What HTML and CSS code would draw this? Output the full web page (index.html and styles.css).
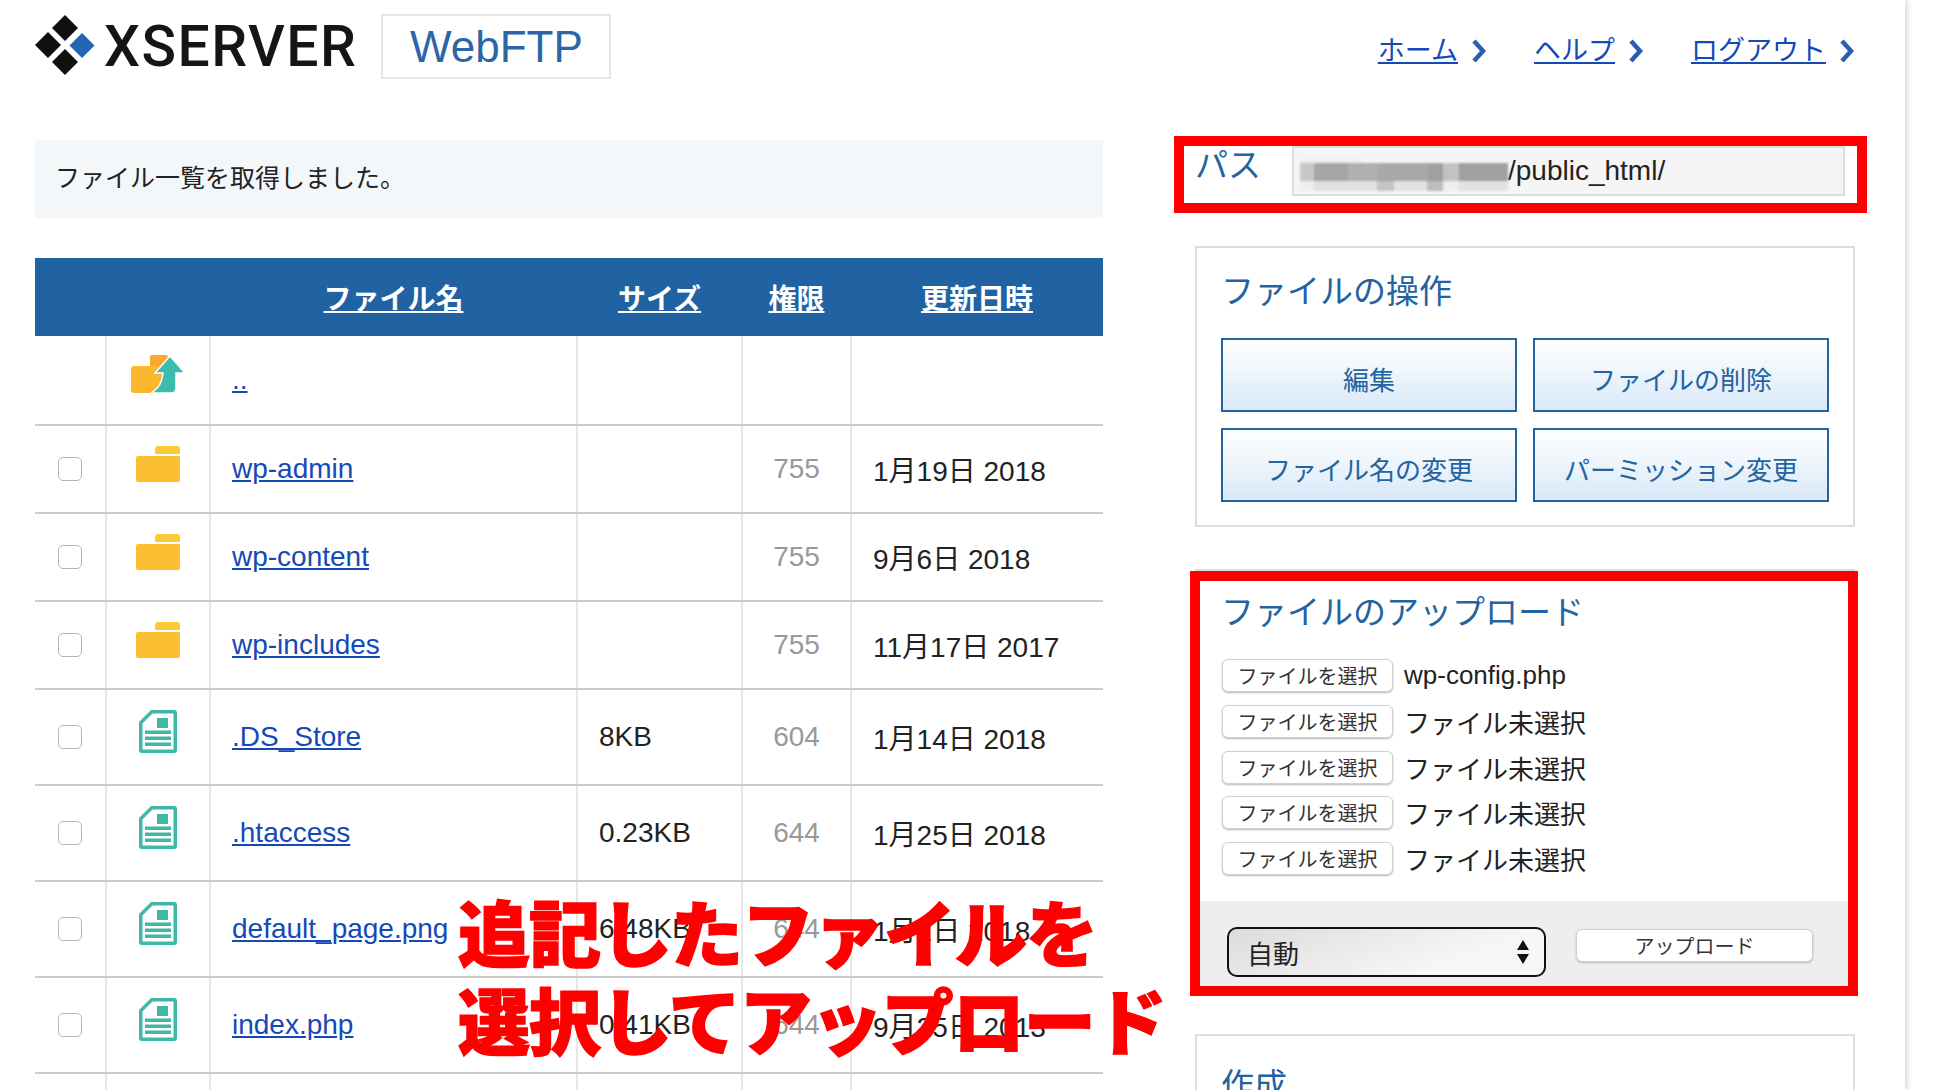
FILE: index.html
```html
<!DOCTYPE html>
<html lang="ja">
<head>
    <meta charset="UTF-8">
    <title>XSERVER WebFTP</title>
    <link rel="stylesheet" href="styles.css">
</head>
<body>

<!-- icons used more than once -->
<svg class="sprites" width="0" height="0">
    <symbol id="i-folder" viewBox="0 0 44 36">
        <path d="M19 8V3a3 3 0 0 1 3-3h19a3 3 0 0 1 3 3v5z" fill="#fdc938"/>
        <path d="M0 12a2 2 0 0 1 2-2h42v24a2 2 0 0 1-2 2H2a2 2 0 0 1-2-2z" fill="#fcbf32"/>
    </symbol>
    <symbol id="i-file" viewBox="0 0 38 43">
        <path d="M12 0h23a3 3 0 0 1 3 3v37a3 3 0 0 1-3 3H3a3 3 0 0 1-3-3V12z" fill="#3fb8a8"/>
        <path d="M13.5 3.500H34.500V39.500H3.500V13.500z" fill="#fff"/>
        <rect x="18" y="8" width="11" height="10" fill="#3fb8a8"/>
        <rect x="6" y="20.500" width="26" height="3.500" fill="#3fb8a8"/>
        <rect x="6" y="26.500" width="26" height="3.500" fill="#3fb8a8"/>
        <rect x="6" y="32.500" width="26" height="3.500" fill="#3fb8a8"/>
    </symbol>
    <symbol id="i-chevron" viewBox="0 0 16 24">
        <path d="M3 2l9 10-9 10" fill="none" stroke="#2c5cb4" stroke-width="4.500"/>
    </symbol>
</svg>

<div class="page">

    <!-- Top bar -->
    <header class="topbar">
        <div class="brand">
            <svg class="brand-mark" width="60" height="60" viewBox="0 0 60 60">
                <path d="M30 0l13 13-13 13-13-13z" fill="#111"/>
                <path d="M13 17l13 13-13 13L0 30z" fill="#111"/>
                <path d="M47 18l12.500 12.500L47 43 34.500 30.500z" fill="#2265b0"/>
                <path d="M30 34l13 13-13 13-13-13z" fill="#111"/>
            </svg>
            <span class="brand-name">XSERVER</span>
            <span class="brand-app">WebFTP</span>
        </div>
        <nav class="topnav">
            <a href="#">ホーム</a><svg class="chev"><use href="#i-chevron"/></svg>
            <a href="#">ヘルプ</a><svg class="chev"><use href="#i-chevron"/></svg>
            <a href="#">ログアウト</a><svg class="chev"><use href="#i-chevron"/></svg>
        </nav>
    </header>

    <!-- File list -->
    <main class="files">
        <p class="notice">ファイル一覧を取得しました。</p>

        <table class="filetable">
            <colgroup>
                <col class="c-check"><col class="c-icon"><col class="c-name"><col class="c-size"><col class="c-perm"><col class="c-date">
            </colgroup>
            <thead>
                <tr>
                    <th></th>
                    <th></th>
                    <th><a href="#">ファイル名</a></th>
                    <th><a href="#">サイズ</a></th>
                    <th><a href="#">権限</a></th>
                    <th><a href="#">更新日時</a></th>
                </tr>
            </thead>
            <tbody>
                <tr class="r-up">
                    <td></td>
                    <td class="icon">
                        <svg class="i-up" viewBox="0 0 54 38">
                            <rect x="19" y="0" width="18" height="12" rx="2" fill="#f9a92e"/>
                            <path d="M0 14a3 3 0 0 1 3-3h37v27H3a3 3 0 0 1-3-3z" fill="#fbb72e"/>
                            <path d="M39 1l15 17h-9v15q0 5-5 5H20q11-6 12-20h-8z" fill="#3cbcab" stroke="#fff" stroke-width="1.500"/>
                        </svg>
                    </td>
                    <td class="name"><a href="#">..</a></td>
                    <td></td>
                    <td></td>
                    <td></td>
                </tr>
                <tr class="r-dir">
                    <td class="check"><input type="checkbox"></td>
                    <td class="icon"><svg class="i-folder"><use href="#i-folder"/></svg></td>
                    <td class="name"><a href="#">wp-admin</a></td>
                    <td></td>
                    <td class="perm">755</td>
                    <td>1月19日 2018</td>
                </tr>
                <tr class="r-dir">
                    <td class="check"><input type="checkbox"></td>
                    <td class="icon"><svg class="i-folder"><use href="#i-folder"/></svg></td>
                    <td class="name"><a href="#">wp-content</a></td>
                    <td></td>
                    <td class="perm">755</td>
                    <td>9月6日 2018</td>
                </tr>
                <tr class="r-dir">
                    <td class="check"><input type="checkbox"></td>
                    <td class="icon"><svg class="i-folder"><use href="#i-folder"/></svg></td>
                    <td class="name"><a href="#">wp-includes</a></td>
                    <td></td>
                    <td class="perm">755</td>
                    <td>11月17日 2017</td>
                </tr>
                <tr class="r-file">
                    <td class="check"><input type="checkbox"></td>
                    <td class="icon"><svg class="i-file"><use href="#i-file"/></svg></td>
                    <td class="name"><a href="#">.DS_Store</a></td>
                    <td>8KB</td>
                    <td class="perm">604</td>
                    <td>1月14日 2018</td>
                </tr>
                <tr class="r-file">
                    <td class="check"><input type="checkbox"></td>
                    <td class="icon"><svg class="i-file"><use href="#i-file"/></svg></td>
                    <td class="name"><a href="#">.htaccess</a></td>
                    <td>0.23KB</td>
                    <td class="perm">644</td>
                    <td>1月25日 2018</td>
                </tr>
                <tr class="r-file">
                    <td class="check"><input type="checkbox"></td>
                    <td class="icon"><svg class="i-file"><use href="#i-file"/></svg></td>
                    <td class="name"><a href="#">default_page.png</a></td>
                    <td>6.48KB</td>
                    <td class="perm">644</td>
                    <td>1月2日 2018</td>
                </tr>
                <tr class="r-file">
                    <td class="check"><input type="checkbox"></td>
                    <td class="icon"><svg class="i-file"><use href="#i-file"/></svg></td>
                    <td class="name"><a href="#">index.php</a></td>
                    <td>0.41KB</td>
                    <td class="perm">644</td>
                    <td>9月25日 2013</td>
                </tr>
                <tr class="r-file">
                    <td></td><td></td><td></td><td></td><td></td><td></td>
                </tr>
            </tbody>
        </table>
    </main>

    <!-- Side panels -->
    <aside class="side">
        <div class="pathrow">
            <span class="pathlabel">パス</span>
            <div class="pathbox">
                <!-- blurred part of the path -->
                <svg class="mosaic" width="208" height="32" viewBox="0 0 208 32">
                    <rect x="0" y="0" width="62" height="5" fill="#ededed"/>
                    <rect x="0" y="4" width="14" height="18" fill="#c8c8c8"/>
                    <rect x="14" y="4" width="34" height="18" fill="#a6a6a6"/>
                    <rect x="48" y="4" width="30" height="18" fill="#b0b0b0"/>
                    <rect x="78" y="4" width="50" height="18" fill="#a8a8a8"/>
                    <rect x="128" y="4" width="15" height="18" fill="#a0a0a0"/>
                    <rect x="143" y="4" width="16" height="18" fill="#c2c2c2"/>
                    <rect x="159" y="4" width="49" height="18" fill="#a0a0a0"/>
                    <rect x="0" y="22" width="14" height="10" fill="#eeeeee"/>
                    <rect x="14" y="22" width="63" height="10" fill="#e0e0e0"/>
                    <rect x="77" y="22" width="17" height="10" fill="#c4c4c4"/>
                    <rect x="94" y="22" width="33" height="10" fill="#e2e2e2"/>
                    <rect x="127" y="22" width="16" height="10" fill="#bcbcbc"/>
                    <rect x="143" y="22" width="16" height="10" fill="#eeeeee"/>
                    <rect x="159" y="22" width="49" height="10" fill="#e2e2e2"/>
                </svg>
                <span>/public_html/</span>
            </div>
        </div>

        <section class="panel panel-ops">
            <h2>ファイルの操作</h2>
            <div class="opsgrid">
                <button class="opbtn">編集</button>
                <button class="opbtn">ファイルの削除</button>
                <button class="opbtn">ファイル名の変更</button>
                <button class="opbtn">パーミッション変更</button>
            </div>
        </section>

        <section class="panel panel-upload">
            <h2>ファイルのアップロード</h2>
            <div class="filerows">
                <div class="filerow"><button class="pick">ファイルを選択</button><span>wp-config.php</span></div>
                <div class="filerow"><button class="pick">ファイルを選択</button><span>ファイル未選択</span></div>
                <div class="filerow"><button class="pick">ファイルを選択</button><span>ファイル未選択</span></div>
                <div class="filerow"><button class="pick">ファイルを選択</button><span>ファイル未選択</span></div>
                <div class="filerow"><button class="pick">ファイルを選択</button><span>ファイル未選択</span></div>
            </div>
            <div class="uploadbar">
                <div class="modeselect">
                    <span>自動</span>
                    <svg width="14" height="24" viewBox="0 0 14 24"><path d="M7 0l6 10H1zM7 24l6-10H1z" fill="#111"/></svg>
                </div>
                <button class="pick uploadbtn">アップロード</button>
            </div>
        </section>

        <section class="panel panel-create">
            <h2>作成</h2>
        </section>
    </aside>

    <!-- Red annotations drawn over the screenshot -->
    <div class="mark mark-path"></div>
    <div class="mark mark-upload"></div>
    <div class="callout">追記したファイルを<br>選択してアップロード</div>
</div>

</body>
</html>
```

FILE: styles.css
```css
* {
    box-sizing: border-box;
    margin: 0;
    padding: 0;
}

html, body {
    height: 100%;
    overflow: hidden;
    background: #fff;
}

body {
    font-family: "Liberation Sans", "Noto Sans CJK JP", sans-serif;
    font-size: 28px;
    color: #222;
}

a {
    color: #1549b8;
}

.sprites {
    position: absolute;
}

/* Page frame */
.page {
    position: relative;
    width: 1905px;
    height: 1090px;
    overflow: hidden;
    padding-left: 35px;
    display: grid;
    grid-template-columns: 1068px 660px;
    grid-template-rows: 140px 1fr;
    column-gap: 92px;
    background: #fff;
    box-shadow: 3px 0 5px #dedede;
}

/* Top bar */
.topbar {
    grid-column: 1 / 3;
    display: flex;
    justify-content: space-between;
    align-items: flex-start;
    padding-top: 14px;
}

.brand {
    display: flex;
    align-items: flex-start;
}

.brand-mark {
    margin-top: 1px;
}

.brand-name {
    font-family: Roboto, "Liberation Sans", sans-serif;
    font-weight: 500;
    font-size: 57px;
    line-height: 66px;
    letter-spacing: 1.5px;
    color: #151515;
    margin-left: 9px;
}

.brand-app {
    width: 230px;
    height: 65px;
    margin-left: 24px;
    border: 2px solid #dfe7ef;
    color: #2a66a8;
    font-size: 44px;
    line-height: 61px;
    text-align: center;
}

.topnav {
    display: flex;
    align-items: center;
    padding-top: 21px;
    font-size: 27px;
    line-height: 32px;
}

.chev {
    width: 16px;
    height: 24px;
    margin-left: 13px;
    margin-right: 47px;
}

.chev:last-child {
    margin-right: 0;
}

/* File list */
.notice {
    height: 78px;
    padding-left: 20px;
    margin-bottom: 40px;
    background: #f4f7fa;
    font-size: 25px;
    line-height: 76px;
}

.filetable {
    width: 1068px;
    table-layout: fixed;
    border-collapse: collapse;
}

.c-check { width: 71px; }
.c-icon { width: 104px; }
.c-name { width: 367px; }
.c-size { width: 165px; }
.c-perm { width: 109px; }
.c-date { width: 252px; }

.filetable th {
    height: 78px;
    background: #2162a3;
    font-size: 28px;
    font-weight: 700;
    text-align: center;
}

.filetable th a {
    color: #fff;
}

.filetable td {
    padding: 0 0 0 21px;
    border-bottom: 2px solid #cccccc;
    border-right: 2px solid #e8e8e8;
    vertical-align: middle;
    white-space: nowrap;
}

.filetable td:last-child {
    border-right: 0;
}

.r-up td { height: 89px; }
.r-dir td { height: 88px; }
.r-file td { height: 96px; }

.filetable .check {
    padding: 0;
    text-align: center;
}

.check input {
    appearance: none;
    display: block;
    width: 24px;
    height: 24px;
    margin: 0 auto;
    border: 1.5px solid #b5b5b5;
    border-radius: 5px;
    background: #fff;
}

.filetable .icon {
    padding: 0;
}

.icon svg {
    display: block;
    margin: 0 auto;
}

.i-up { width: 54px; height: 38px; position: relative; top: -6px; }
.i-folder { width: 44px; height: 36px; position: relative; top: -5px; }
.i-file { width: 38px; height: 43px; position: relative; top: -6px; }

.filetable .perm {
    padding: 0;
    text-align: center;
    color: #999;
}

/* Side panels */
.pathrow {
    display: flex;
    height: 50px;
    margin-top: 6px;
    margin-bottom: 50px;
}

.pathlabel {
    width: 97px;
    color: #23639f;
    font-size: 33px;
    line-height: 40px;
}

.pathbox {
    display: flex;
    align-items: center;
    width: 553px;
    height: 50px;
    padding-left: 6px;
    background: #f5f5f5;
    border: 2px solid #dddddd;
}

.mosaic {
    filter: blur(1px);
    margin-top: 8px;
}

.panel {
    border: 2px solid #dddddd;
}

.panel h2 {
    color: #23639f;
    font-size: 33px;
    font-weight: 400;
    line-height: 40px;
    padding: 24px 0 0 24px;
}

.panel-ops {
    height: 281px;
    margin-bottom: 42px;
}

.opsgrid {
    display: grid;
    grid-template-columns: 296px 296px;
    grid-auto-rows: 74px;
    gap: 16px;
    margin: 26px 0 0 24px;
}

.opbtn {
    border: 2px solid #23639f;
    background: linear-gradient(#ffffff, #d9e9f8);
    color: #23639f;
    font-family: inherit;
    font-size: 26px;
    padding-top: 6px;
}

.panel-upload {
    height: 423px;
    margin-bottom: 42px;
}

.panel-upload h2 {
    padding-top: 22px;
}

.filerows {
    display: flex;
    flex-direction: column;
    gap: 12.75px;
    margin: 26px 0 0 25px;
    height: 208px;
}

.filerow {
    display: flex;
    align-items: center;
    height: 33px;
    font-size: 26px;
}

.filerow span {
    margin-left: 11px;
}

.filerow span:first-of-type {
    white-space: nowrap;
}

.pick {
    width: 171px;
    height: 33px;
    border: 1px solid #d0d0d0;
    border-radius: 6px;
    background: #fff;
    box-shadow: 0 1px 2px #b8b8b8;
    color: #333;
    font-family: inherit;
    font-size: 20px;
}

.uploadbar {
    display: flex;
    align-items: flex-start;
    height: 91px;
    margin-top: 34px;
    padding: 26px 0 0 30px;
    background: #eeeeee;
}

.modeselect {
    display: flex;
    align-items: center;
    justify-content: space-between;
    width: 319px;
    height: 50px;
    padding: 0 14px 0 18px;
    border: 2px solid #111;
    border-radius: 10px;
    background: linear-gradient(160deg, #dcdcdc, #f6f6f6 70%);
    font-size: 26px;
}

.uploadbtn {
    width: 237px;
    margin: 2px 0 0 30px;
}

.panel-create {
    height: 200px;
}

.panel-create h2 {
    padding-top: 30px;
}

/* Red annotations */
.mark {
    position: absolute;
    border: 10px solid #ff0000;
}

.mark-path {
    left: 1174px;
    top: 136px;
    width: 693px;
    height: 77px;
}

.mark-upload {
    left: 1190px;
    top: 571px;
    width: 668px;
    height: 425px;
}

.callout {
    position: absolute;
    left: 458px;
    top: 892px;
    color: #ff0000;
    font-size: 72px;
    font-weight: 900;
    line-height: 88px;
    letter-spacing: -1px;
    -webkit-text-stroke: 1.5px #ff0000;
    white-space: nowrap;
}
```
